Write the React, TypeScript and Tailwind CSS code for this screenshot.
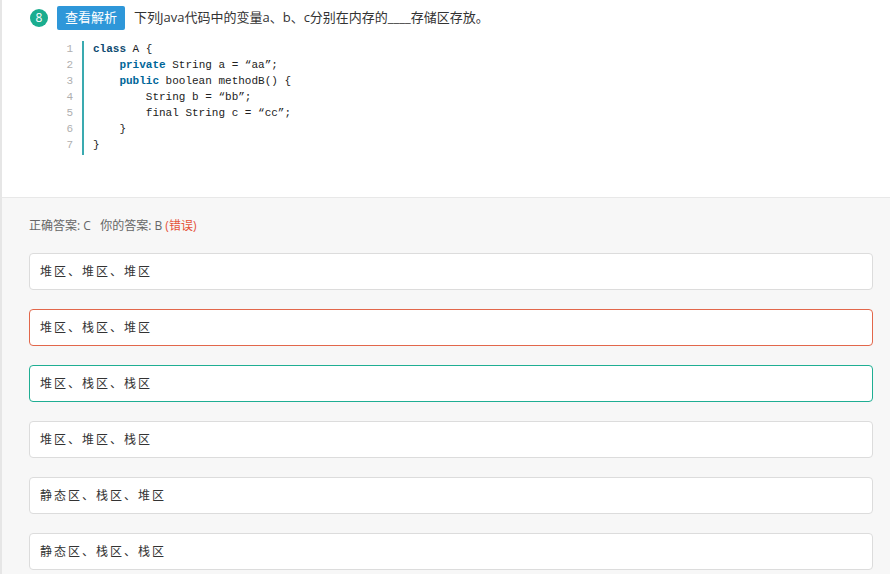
import React from "react";

const codeLines: React.ReactNode[] = [
  <><span className="text-[#0d4a70] font-bold">class</span> A {"{"}</>,
  <>{"    "}<span className="text-[#006699] font-bold">private</span> String a = “aa”;</>,
  <>{"    "}<span className="text-[#006699] font-bold">public</span> boolean methodB() {"{"}</>,
  <>{"        "}String b = “bb”;</>,
  <>{"        "}final String c = “cc”;</>,
  <>{"    "}{"}"}</>,
  <>{"}"}</>,
];

const options = [
  { text: "堆区、堆区、堆区", border: "border-[#dcdcdc]" },
  { text: "堆区、栈区、堆区", border: "border-[#e2674b]" },
  { text: "堆区、栈区、栈区", border: "border-[#1fae93]" },
  { text: "堆区、堆区、栈区", border: "border-[#dcdcdc]" },
  { text: "静态区、栈区、堆区", border: "border-[#dcdcdc]" },
  { text: "静态区、栈区、栈区", border: "border-[#dcdcdc]" },
];

export default function App() {
  return (
    <div
      className="w-[890px] h-[574px] overflow-hidden bg-[#f7f7f7] border-l-2 border-[#e6e6e6]"
      style={{ fontFamily: '"Open Sans", "Noto Sans CJK SC", "Liberation Sans", sans-serif' }}
    >
      <div className="bg-white h-[198px] border-b border-[#e8e8e8] pt-[6px]">
        <div className="flex items-center h-[24px] pl-[28px]">
          <div className="w-[18px] h-[18px] rounded-full bg-[#1aad8f] text-white text-[12px] leading-none flex items-center justify-center">
            8
          </div>
          <div className="ml-[9px] h-[24px] px-[8px] bg-[#2e97d9] rounded-[2px] text-white text-[13px] flex items-center">
            查看解析
          </div>
          <div className="ml-[9px] text-[13px] text-[#333]">
            下列Java代码中的变量a、b、c分别在内存的____存储区存放。
          </div>
        </div>
        <div
          className="flex mt-[11px] ml-[62px] text-[11px] leading-[16px]"
          style={{ fontFamily: '"Liberation Mono", "DejaVu Sans Mono", monospace' }}
        >
          <div className="flex flex-col items-end w-[18px] pr-[9px] text-[#afafaf] pb-[2px]">
            {codeLines.map((_, i) => (
              <div key={i}>{i + 1}</div>
            ))}
          </div>
          <div className="w-[2px] bg-[#3aaab0]" />
          <div className="pl-[9px] text-[#222] whitespace-pre">
            {codeLines.map((l, i) => (
              <div key={i}>{l}</div>
            ))}
          </div>
        </div>
      </div>
      <div className="pl-[27px] pr-[17px]">
        <div className="text-[12px] text-[#666] mt-[19px] h-[18px] leading-[18px]">
          正确答案: C{"\u00a0\u00a0\u00a0"}你的答案: B <span className="text-[#e5533b]">(错误)</span>
        </div>
        <div className="flex flex-col gap-[19px] mt-[18px]">
          {options.map((o, i) => (
            <div
              key={i}
              className={`h-[37px] bg-white border rounded-[4px] ${o.border} flex items-center pl-[10px] text-[12px] text-[#333] tracking-[2px]`}
            >
              {o.text}
            </div>
          ))}
        </div>
      </div>
    </div>
  );
}
